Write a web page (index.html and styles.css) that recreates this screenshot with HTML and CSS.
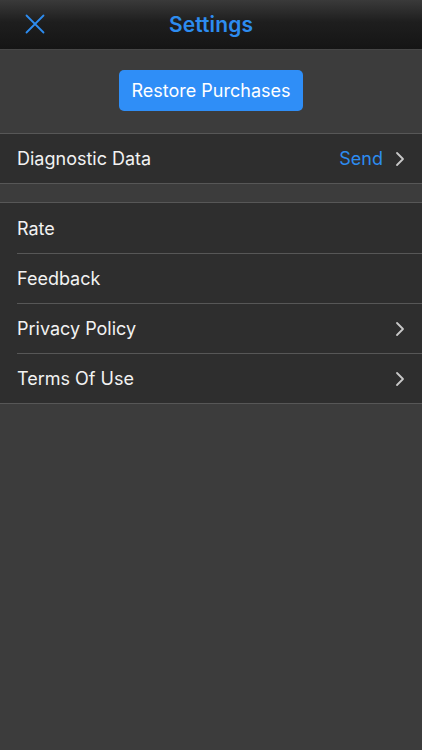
FILE: index.html
```html
<!DOCTYPE html>
<html>
<head>
<meta charset="utf-8">
<link rel="stylesheet" href="styles.css">
</head>
<body>
<div class="app">
  <header class="navbar">
    <button class="close" aria-label="Close">
      <svg width="20" height="20" viewBox="0 0 20 20"><path d="M1.5 1.5 L18.5 18.5 M18.5 1.5 L1.5 18.5" stroke="#2d8cf0" stroke-width="1.8" stroke-linecap="round" fill="none"/></svg>
    </button>
    <h1 class="title">Settings</h1>
  </header>
  <div class="restore-wrap">
    <button class="restore">Restore Purchases</button>
  </div>
  <ul class="group">
    <li class="row first"><span class="label">Diagnostic Data</span><span class="detail">Send</span><span class="chev"><svg width="10" height="16" viewBox="0 0 10 16"><path d="M2 2 L8 8 L2 14" stroke="#c8c8c8" stroke-width="1.8" fill="none" stroke-linecap="round" stroke-linejoin="round"/></svg></span></li>
  </ul>
  <ul class="group">
    <li class="row"><span class="label">Rate</span></li>
    <li class="row"><span class="label">Feedback</span></li>
    <li class="row"><span class="label">Privacy Policy</span><span class="chev"><svg width="10" height="16" viewBox="0 0 10 16"><path d="M2 2 L8 8 L2 14" stroke="#c8c8c8" stroke-width="1.8" fill="none" stroke-linecap="round" stroke-linejoin="round"/></svg></span></li>
    <li class="row"><span class="label">Terms Of Use</span><span class="chev"><svg width="10" height="16" viewBox="0 0 10 16"><path d="M2 2 L8 8 L2 14" stroke="#c8c8c8" stroke-width="1.8" fill="none" stroke-linecap="round" stroke-linejoin="round"/></svg></span></li>
  </ul>
</div>
</body>
</html>
```
FILE: styles.css
```css
html, body {
  margin: 0;
  padding: 0;
  background: #3c3c3c;
}
body {
  font-family: Inter, "Noto Sans", "Liberation Sans", sans-serif;
  width: 422px;
  height: 750px;
  overflow: hidden;
}
.app {
  display: flex;
  flex-direction: column;
}
.navbar {
  height: 49px;
  background: linear-gradient(to bottom, #3a3a3a 0%, #1e1e1e 45%, #151515 100%);
  border-bottom: 1px solid #474747;
  display: flex;
  align-items: center;
  justify-content: center;
  position: relative;
}
.close {
  position: absolute;
  left: 25px;
  top: 14px;
  width: 20px;
  height: 20px;
  padding: 0;
  border: 0;
  background: none;
  display: flex;
}
.title {
  margin: 0;
  font-size: 21px;
  font-weight: 600;
  color: #2d8cf0;
  letter-spacing: 0.1px;
}
.restore-wrap {
  display: flex;
  justify-content: center;
  padding: 20px 0 22px;
}
.restore {
  width: 184px;
  height: 41px;
  border: 0;
  border-radius: 5px;
  background: #2f8ef7;
  color: #ffffff;
  font-family: inherit;
  font-size: 18px;
  font-weight: 400;
  padding: 0;
}
.group {
  list-style: none;
  margin: 0 0 18px;
  padding: 0;
  background: #2e2e2e;
  border-top: 1px solid #575757;
  border-bottom: 1px solid #575757;
}
.row {
  height: 50px;
  display: flex;
  align-items: center;
  margin-left: 17px;
  padding-right: 17px;
  color: #f2f2f2;
  font-size: 18px;
  box-sizing: border-box;
}
.row.first {
  height: 49px;
}
.row + .row {
  border-top: 1px solid #575757;
  height: 50px;
}
.label {
  flex: 1;
}
.detail {
  color: #2d8cf0;
  margin-right: 12px;
}
.chev {
  display: flex;
  width: 10px;
}
```
